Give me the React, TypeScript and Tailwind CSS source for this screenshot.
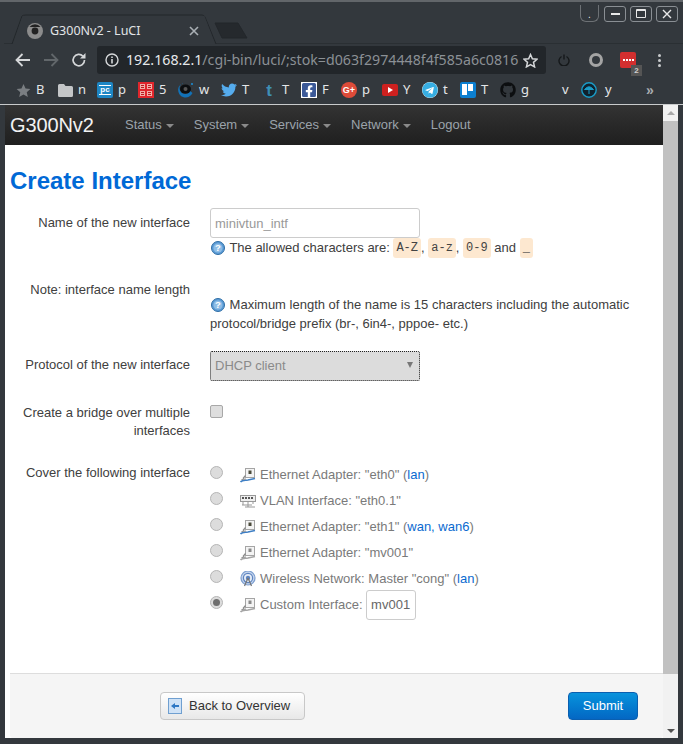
import type { ReactNode } from "react";
import { FaFacebookSquare, FaGithub, FaTelegram, FaTwitter } from "react-icons/fa";

const sans = "font-['Liberation_Sans',Arial,sans-serif]";

function HelpIcon() {
  return (
    <svg width="14" height="14" viewBox="0 0 14 14" className="mr-[1px] ml-[1px] inline-block shrink-0 align-[-3px]">
      <circle cx="7" cy="7" r="6.5" fill="#5b9bd5" stroke="#2f6ea5" />
      <circle cx="7" cy="7" r="4.6" fill="#8ebde6" />
      <text x="7" y="10.4" textAnchor="middle" fontSize="9.5" fontWeight="700" fill="#fff" fontFamily="Liberation Sans">?</text>
    </svg>
  );
}

function EthIcon({ active = true }: { active?: boolean }) {
  const blue = active ? "#3f7fc4" : "#a5a5a5";
  return (
    <svg width="16" height="16" viewBox="0 0 16 16" className="shrink-0">
      <rect x="5.5" y="1.5" width="9" height="9" fill="#f4f4f4" stroke="#a5a5a5" />
      <rect x="8.5" y="3.5" width="3" height="3.5" fill={active ? "#4a4a3a" : "#8a8a8a"} />
      <path d="M0.5 15C2.5 12.5 5 13.5 8 13L15 11.5" fill="none" stroke={blue} strokeWidth="1.6" />
      <path d="M3 11.5L5.5 8.5M1.5 12.5L6 12" fill="none" stroke="#8a8a8a" strokeWidth="1.2" />
    </svg>
  );
}

function VlanIcon() {
  return (
    <svg width="16" height="16" viewBox="0 0 16 16" className="shrink-0">
      <rect x="0.5" y="2.5" width="15" height="6" fill="#eee" stroke="#999" />
      <path d="M2 4h2v2H2zM5 4h2v2H5zM8 4h2v2H8zM11 4h2v2h-2z" fill="#555" />
      <path d="M3 9v3M8 9v5M13 9v2M2 12h10M5 14h10" stroke="#999" />
    </svg>
  );
}

function WifiIcon() {
  return (
    <svg width="16" height="16" viewBox="0 0 16 16" className="shrink-0">
      <circle cx="8" cy="7" r="7" fill="#c6d6ee" stroke="#7d9fd0" strokeWidth="1.2" />
      <circle cx="8" cy="7" r="4.6" fill="#e6edf7" stroke="#5d84c0" strokeWidth="1.2" />
      <circle cx="8" cy="7" r="2.2" fill="#5d84c0" />
      <path d="M8 7L4.5 15M8 7L11.5 15" stroke="#777" strokeWidth="1.2" />
    </svg>
  );
}

function Radio({ checked = false }: { checked?: boolean }) {
  return (
    <span className="flex h-[13px] w-[13px] shrink-0 items-center justify-center rounded-full border border-[#b5b5b5] bg-[#dcdcdc]">
      {checked && <span className="h-[7px] w-[7px] rounded-full bg-[#6e6e6e]" />}
    </span>
  );
}

function Code({ children }: { children: ReactNode }) {
  return (
    <code className="rounded-[3px] bg-[#fde8d0] px-[3px] py-[1px] font-['Liberation_Mono',monospace] text-[12px] text-[#444]">
      {children}
    </code>
  );
}

function Link({ children }: { children: ReactNode }) {
  return <span className="text-[#0a6ad0]">{children}</span>;
}

function CoverRow({ icon, checked, children }: { icon: ReactNode; checked?: boolean; children: ReactNode }) {
  return (
    <div className="flex h-[26px] items-center">
      <span className="mb-[5px] w-[30px]">
        <Radio checked={checked} />
      </span>
      <span className="mr-[4px] mb-[1px]">{icon}</span>
      <span className="mb-[1px] text-[#7a7a7a]">{children}</span>
    </div>
  );
}

function NavItem({ label, caret = true }: { label: string; caret?: boolean }) {
  return (
    <span className="flex items-center gap-[4px] text-[#9ba3ab]">
      {label}
      {caret && <span className="mt-[1px] h-0 w-0 border-x-[4px] border-t-[4px] border-x-transparent border-t-[#8a8a8a]" />}
    </span>
  );
}

function Bookmark({ icon, label, width, gap = "gap-[5px]" }: { icon: ReactNode; label: string; width: string; gap?: string }) {
  return (
    <div className={`flex shrink-0 items-center ${gap} ${width}`}>
      <span className="flex h-[16px] w-[16px] shrink-0 items-center justify-center">{icon}</span>
      <span className="font-['Noto_Sans',sans-serif] text-[13px] text-[#e4e6e8]">{label}</span>
    </div>
  );
}

function Square({ bg, children, round = false }: { bg: string; children?: ReactNode; round?: boolean }) {
  return (
    <span
      className={`flex h-[16px] w-[16px] items-center justify-center text-[9px] font-bold leading-none text-white ${round ? "rounded-full" : "rounded-[2px]"}`}
      style={{ background: bg }}
    >
      {children}
    </span>
  );
}

function WindowButton({ children }: { children: ReactNode }) {
  return (
    <span className="flex h-[16px] w-[22px] items-center justify-center rounded-[3px] border border-[#8a8f94] text-[#e8e8e8]">
      {children}
    </span>
  );
}

function BrowserChrome() {
  return (
    <div className="shrink-0 bg-[#33383d]">
      {/* tab strip */}
      <div className="relative h-[44px] border-t-2 border-[#62666a]">
        <svg width="683" height="42" className="absolute top-0 left-0" viewBox="0 0 683 42">
          <path d="M4 42H12L22 14Q23 13 26 13H202Q204 13 205 15L216 42H683" fill="none" stroke="#23272b" />
          <path d="M13 42L22.5 14H204.5L215 42Z" fill="#33383d" />
          <path d="M215 21H238L247 36H222Z" fill="#25292d" stroke="#23272b" />
        </svg>
        <div className="relative flex h-[40px] items-center pt-[18px] pl-[27px]">
          <svg width="16" height="16" viewBox="0 0 16 16">
            <circle cx="8" cy="8" r="8" fill="#8c8c8c" />
            <path d="M2.5 4A7 7 0 0 1 13.5 4Z" fill="#222" />
            <circle cx="8" cy="8" r="3.4" fill="#222" />
          </svg>
          <span className="ml-[7px] w-[139px] font-['Noto_Sans',sans-serif] text-[12.5px] text-[#e2e4e6]">G300Nv2 - LuCI</span>
          <svg width="10" height="10" viewBox="0 0 10 10">
            <path d="M1 1L9 9M9 1L1 9" stroke="#aab0b5" strokeWidth="1.6" />
          </svg>
        </div>
        <div className="absolute top-[3px] right-[5px] flex items-center gap-[4px]">
          <span className="mr-[1px] flex h-[17px] w-[19px] items-end justify-center rounded-b-[6px] border-x border-b border-[#6d7175] pb-[1px] text-[10px] leading-[10px] text-[#e8e8e8]">.</span>
          <WindowButton><span className="h-[2px] w-[9px] bg-[#e8e8e8]" /></WindowButton>
          <WindowButton><span className="h-[9px] w-[10px] rounded-[1px] border border-t-2 border-[#e8e8e8]" /></WindowButton>
          <WindowButton>
            <svg width="10" height="10" viewBox="0 0 10 10"><path d="M1 1L9 9M9 1L1 9" stroke="#e8e8e8" strokeWidth="1.4" /></svg>
          </WindowButton>
        </div>
      </div>
      {/* toolbar */}
      <div className="flex h-[32px] items-center">
        <div className="flex w-[97px] items-center pl-[15px]">
          <svg width="16" height="14" viewBox="0 0 16 14"><path d="M15 7H2M7.5 1L1.5 7L7.5 13" fill="none" stroke="#d5d7d9" strokeWidth="1.8" /></svg>
          <svg width="16" height="14" viewBox="0 0 16 14" className="ml-[12px]"><path d="M1 7H14M8.5 1L14.5 7L8.5 13" fill="none" stroke="#62676b" strokeWidth="1.8" /></svg>
          <svg width="16" height="16" viewBox="0 0 16 16" className="ml-[12px]"><path d="M13.5 8A5.7 5.7 0 1 1 12 4.2" fill="none" stroke="#d5d7d9" strokeWidth="1.7" /><path d="M14.5 1V6.5H9Z" fill="#d5d7d9" /></svg>
        </div>
        <div className="flex h-[28px] w-[449px] items-center justify-between rounded-[3px] bg-[#22262a] pr-[8px] pl-[8px]">
          <svg width="14" height="14" viewBox="0 0 14 14" className="shrink-0"><circle cx="7" cy="7" r="6" fill="none" stroke="#d5d7d9" strokeWidth="1.4" /><path d="M7 6V10.5M7 3.5V5" stroke="#d5d7d9" strokeWidth="1.6" /></svg>
          <span className="ml-[7px] flex-1 overflow-hidden font-['Noto_Sans',sans-serif] text-[14.2px] whitespace-nowrap text-[#e6e8ea]">
            192.168.2.1<span className="text-[#8b9095]">/cgi-bin/luci/;stok=d063f2974448f4f585a6c0816</span>
          </span>
          <svg width="15" height="15" viewBox="0 0 24 24" className="ml-[4px] shrink-0"><path d="M12 2.5L15 9.3L22.4 10L16.8 15L18.5 22.2L12 18.4L5.5 22.2L7.2 15L1.6 10L9 9.3Z" fill="none" stroke="#d5d7d9" strokeWidth="2.4" /></svg>
        </div>
        <div className="relative flex flex-1 items-center pl-[12px]">
          <svg width="12" height="12" viewBox="0 0 12 12"><path d="M3.5 2.5A5 5 0 1 0 8.5 2.5M6 0.5V5.5" fill="none" stroke="#15181a" strokeWidth="1.4" /></svg>
          <span className="ml-[19px] h-[14px] w-[14px] rounded-full border-[3px] border-[#a4a4a4]" />
          <span className="ml-[17px] flex h-[16px] w-[16px] items-center justify-center gap-[1px] rounded-[2px] bg-[#d22f2f]">
            <i className="h-[2px] w-[2px] bg-white" /><i className="h-[2px] w-[2px] bg-white" /><i className="h-[2px] w-[2px] bg-white" /><i className="h-[2px] w-[2px] bg-white" />
          </span>
          <span className="absolute top-[13px] left-[85px] flex h-[11px] w-[11px] items-center justify-center bg-[#555] text-[8px] font-bold text-[#d0d0d0]">2</span>
          <span className="ml-[22px] flex flex-col gap-[2px]">
            <i className="h-[3px] w-[3px] rounded-full bg-[#c9cbcd]" /><i className="h-[3px] w-[3px] rounded-full bg-[#c9cbcd]" /><i className="h-[3px] w-[3px] rounded-full bg-[#c9cbcd]" />
          </span>
        </div>
      </div>
      {/* bookmarks */}
      <div className="flex h-[28px] items-center pl-[15px]">
        <Bookmark width="w-[42px]" label="B" icon={<svg width="15" height="15" viewBox="0 0 24 24"><path d="M12 1.5L15.3 8.7L23 9.5L17.2 14.8L18.9 22.5L12 18.5L5.1 22.5L6.8 14.8L1 9.5L8.7 8.7Z" fill="#7a7e82" /></svg>} />
        <Bookmark width="w-[40px]" label="n" icon={<svg width="15" height="13" viewBox="0 0 15 13"><path d="M0 1.5Q0 0 1.5 0H6L7.5 2H13.5Q15 2 15 3.5V11.5Q15 13 13.5 13H1.5Q0 13 0 11.5Z" fill="#c4c6c8" /></svg>} />
        <Bookmark width="w-[41px]" label="p" icon={<Square bg="#1d86c4"><span className="border-y border-white px-[1px] text-[8px]">pc</span></Square>} />
        <Bookmark width="w-[40px]" label="5" icon={<svg width="16" height="16" viewBox="0 0 16 16"><rect width="16" height="16" fill="#e0262c" /><path d="M2 2H7V7H2ZM9 2H14V7H9ZM2 9H7V14H2ZM9 9H14V14H9Z" fill="#f2b0a8" /><path d="M3 3.5H6M3 5.500H6M10 3.5H13M10 5.500H13M3 10.500H6M3 12.500H6M10 10.500H13M10 12.500H13" stroke="#b81c20" /></svg>} />
        <Bookmark width="w-[43px]" label="w" icon={<svg width="16" height="16" viewBox="0 0 16 16"><path d="M7.500 0.500A7.500 7.500 0 1 0 14.500 11L12 9A5 4 0 0 1 7 12A4.500 4.500 0 0 1 7.500 0.500Z" fill="#1272b8" /><ellipse cx="7.500" cy="7" rx="5.500" ry="4.500" fill="#0c0e10" /><circle cx="7.500" cy="7" r="2" fill="#555" /><circle cx="14" cy="2" r="1" fill="#1a8fd8" /></svg>} />
        <Bookmark width="w-[40px]" label="T" icon={<FaTwitter size={16} color="#55acee" />} />
        <Bookmark width="w-[40px]" label="T" icon={<span className="text-[17px] leading-none font-bold text-[#3f8fb5]">t</span>} />
        <Bookmark width="w-[40px]" label="F" icon={<span className="flex h-[16px] w-[16px] items-center justify-center bg-white"><FaFacebookSquare size={16} color="#3b5998" /></span>} />
        <Bookmark width="w-[41px]" label="p" icon={<Square bg="#dd4b39" round>G+</Square>} />
        <Bookmark width="w-[40px]" label="Y" icon={<svg width="16" height="12" viewBox="0 0 16 12"><rect width="16" height="12" rx="2" fill="#cd201f" /><path d="M6 3L11 6L6 9Z" fill="#fff" /></svg>} />
        <Bookmark width="w-[38px]" label="t" icon={<span className="flex h-[16px] w-[16px] items-center justify-center rounded-full bg-white"><FaTelegram size={16} color="#37aee2" /></span>} />
        <Bookmark width="w-[40px]" label="T" icon={<span className="flex h-[16px] w-[16px] gap-[1px] rounded-[2px] bg-[#0c7fd0] p-[2px]"><i className="h-[11px] w-[5px] bg-white" /><i className="h-[7px] w-[5px] bg-white" /></span>} />
        <Bookmark width="w-[41px]" label="g" icon={<FaGithub size={16} color="#0c0e10" />} />
        <Bookmark width="w-[40px]" label="v" icon={<span />} />
        <Bookmark width="w-[65px]" gap="gap-[8px]" label="y" icon={<svg width="16" height="16" viewBox="0 0 16 16"><circle cx="8" cy="8" r="7.2" fill="#10222e" stroke="#1a9cc8" strokeWidth="1.4" /><path d="M3.5 7.5Q8 2 12.5 7.5ZM8 7.5V12" fill="#1a9cc8" stroke="#1a9cc8" /></svg>} />
        <span className="text-[14px] leading-none font-bold text-[#a8acb0]">»</span>
      </div>
      <div className="h-px bg-[#c8cacb]" />
    </div>
  );
}

function FormRow({ label, children, className = "" }: { label: ReactNode; children: ReactNode; className?: string }) {
  return (
    <div className={`flex ${className}`}>
      <div className="w-[180px] shrink-0 text-right text-[#404040]">{label}</div>
      <div className="ml-[20px] w-[430px] shrink-0 text-[#404040]">{children}</div>
    </div>
  );
}

function PageContent() {
  return (
    <div className={`flex min-w-0 flex-1 flex-col bg-white ${sans} text-[13px] leading-[18px]`}>
      <div className="flex h-[40px] shrink-0 items-center bg-gradient-to-b from-[#333333] to-[#1f1f1f] pl-[5px]">
        <span className="w-[115px] text-[20px] tracking-[-0.1px] text-[#f2f2f2]">G300Nv2</span>
        <div className="flex gap-[20px]">
          <NavItem label="Status" />
          <NavItem label="System" />
          <NavItem label="Services" />
          <NavItem label="Network" />
          <NavItem label="Logout" caret={false} />
        </div>
      </div>
      <div className="flex flex-1 flex-col pt-[21px] pl-[5px]">
        <h2 className="h-[29px] text-[24px] leading-[29px] font-bold text-[#0069d6]">Create Interface</h2>
        <FormRow label={<span className="mt-[6px] block">Name of the new interface</span>} className="mt-[13px]">
          <div className="flex h-[30px] w-[210px] items-center rounded-[3px] border border-[#cccccc] px-[4px] pt-[1px] text-[#999]">minivtun_intf</div>
          <div className="mt-[1px] flex h-[18px] items-center whitespace-pre">
            <HelpIcon /> The allowed characters are: <Code>A-Z</Code>, <Code>a-z</Code>, <Code>0-9</Code> and <Code>_</Code>
          </div>
        </FormRow>
        <FormRow label={<span className="block">Note: interface name length</span>} className="mt-[24px]">
          <div className="mt-[15px]">
            <HelpIcon /> Maximum length of the name is 15 characters including the automatic
            <br />
            <span className="mt-[1px] block">protocol/bridge prefix (br-, 6in4-, pppoe- etc.)</span>
          </div>
        </FormRow>
        <FormRow label={<span className="mt-[5px] block">Protocol of the new interface</span>} className="mt-[18px]">
          <div className="flex h-[30px] w-[210px] items-center justify-between rounded-[2px] border border-dotted border-[#222] bg-[#dcdcdc] pr-[6px] pl-[4px] text-[#8a8a8a]">
            DHCP client
            <span className="mb-[3px] h-0 w-0 border-x-[3.5px] border-t-[6px] border-x-transparent border-t-[#777]" />
          </div>
        </FormRow>
        <FormRow
          label={<>Create a bridge over multiple<br />interfaces</>}
          className="mt-[23px]"
        >
          <span className="mt-[1px] block h-[13px] w-[13px] rounded-[2px] border border-[#a8a8a8] bg-[#dedede]" />
        </FormRow>
        <FormRow label={<span className="block">Cover the following interface</span>} className="mt-[24px]">
          <div className="-mt-[2px]">
            <CoverRow icon={<EthIcon />}>Ethernet Adapter: "eth0" (<Link>lan</Link>)</CoverRow>
            <CoverRow icon={<VlanIcon />}>VLAN Interface: "eth0.1"</CoverRow>
            <CoverRow icon={<EthIcon />}>Ethernet Adapter: "eth1" (<Link>wan, wan6</Link>)</CoverRow>
            <CoverRow icon={<EthIcon active={false} />}>Ethernet Adapter: "mv001"</CoverRow>
            <CoverRow icon={<WifiIcon />}>Wireless Network: Master "cong" (<Link>lan</Link>)</CoverRow>
            <CoverRow checked icon={<EthIcon active={false} />}>
              <span className="flex items-center">
                Custom Interface:
                <span className="ml-[3px] flex h-[30px] w-[50px] items-center justify-center rounded-[3px] border border-[#cccccc] text-[#666]">mv001</span>
              </span>
            </CoverRow>
          </div>
        </FormRow>
        <div className="mt-auto flex h-[65px] shrink-0 items-center justify-between rounded-b-[3px] border-t border-[#dddddd] bg-[#f5f5f5] pr-[25px] pb-[1px] pl-[150px]">
          <div className="flex h-[28px] w-[145px] items-center gap-[7px] rounded-[4px] border border-[#c8c8c8] bg-gradient-to-b from-white to-[#e8e8e8] pl-[7px] text-[#333]">
            <svg width="14" height="16" viewBox="0 0 14 16">
              <rect x="0.5" y="0.5" width="13" height="15" fill="#cfe2f6" stroke="#6f9fd0" />
              <path d="M3 8L7 5V7H11V9H7V11Z" fill="#2f78c4" />
            </svg>
            Back to Overview
          </div>
          <div className="flex h-[28px] w-[70px] items-center justify-center rounded-[4px] border border-[#0a5fb0] bg-gradient-to-b from-[#0a93dc] to-[#0467c4] text-white">Submit</div>
        </div>
      </div>
    </div>
  );
}

function Scrollbar() {
  return (
    <div className="flex w-[15px] shrink-0 flex-col items-center bg-[#f1f1f1]">
      <span className="mt-[6px] mb-[6px] h-0 w-0 border-x-[4px] border-b-[4px] border-x-transparent border-b-[#a8a8a8]" />
      <div className="w-full flex-1 bg-[#c1c1c1]" />
      <span className="mt-[55px] mb-[5px] h-0 w-0 border-x-[4px] border-t-[4px] border-x-transparent border-t-[#505050]" />
    </div>
  );
}

export default function App() {
  return (
    <div className={`flex h-[744px] w-[683px] flex-col overflow-hidden bg-[#33383d] ${sans}`}>
      <BrowserChrome />
      <div className="flex min-h-0 flex-1 pr-[5px] pb-[6px] pl-[5px]">
        <PageContent />
        <Scrollbar />
      </div>
    </div>
  );
}
